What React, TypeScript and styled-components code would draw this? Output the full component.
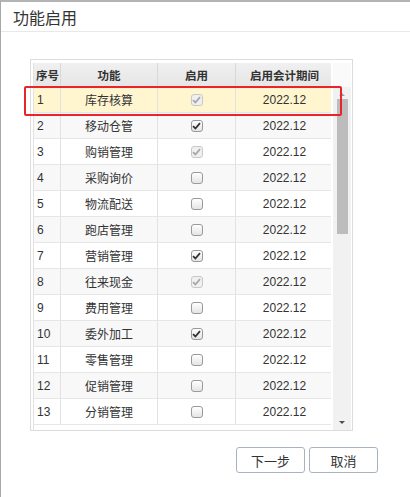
import React, { FC } from "react";
import styled, { createGlobalStyle } from "styled-components";

const GlobalStyle = createGlobalStyle`
  html, body {
    margin: 0;
    padding: 0;
    background: #ffffff;
  }
  body {
    font-family: "Liberation Sans", Arial, "Noto Sans CJK SC", sans-serif;
    color: #333333;
  }
`;

type Row = {
  no: number;
  name: string;
  state: "on" | "locked" | "off";
  period: string;
};

const rows: Row[] = [
  { no: 1, name: "库存核算", state: "locked", period: "2022.12" },
  { no: 2, name: "移动仓管", state: "on", period: "2022.12" },
  { no: 3, name: "购销管理", state: "locked", period: "2022.12" },
  { no: 4, name: "采购询价", state: "off", period: "2022.12" },
  { no: 5, name: "物流配送", state: "off", period: "2022.12" },
  { no: 6, name: "跑店管理", state: "off", period: "2022.12" },
  { no: 7, name: "营销管理", state: "on", period: "2022.12" },
  { no: 8, name: "往来现金", state: "locked", period: "2022.12" },
  { no: 9, name: "费用管理", state: "off", period: "2022.12" },
  { no: 10, name: "委外加工", state: "on", period: "2022.12" },
  { no: 11, name: "零售管理", state: "off", period: "2022.12" },
  { no: 12, name: "促销管理", state: "off", period: "2022.12" },
  { no: 13, name: "分销管理", state: "off", period: "2022.12" },
];

const Dialog = styled.div`
  position: relative;
  box-sizing: border-box;
  width: 410px;
  height: 497px;
  border-top: 2px solid #b4b4b4;
  border-left: 1px solid #a8a8a8;
  background: #ffffff;
  overflow: hidden;
`;

const TitleBar = styled.div`
  display: flex;
  align-items: center;
  height: 29px;
  padding-left: 12px;
  border-bottom: 1px solid #e8e8e8;
  font-family: "Noto Sans CJK SC", sans-serif;
  font-size: 16px;
  color: #333333;
`;

const Body = styled.div`
  padding: 27px 0 0 29px;
`;

const GridFrame = styled.div`
  box-sizing: border-box;
  display: flex;
  width: 323px;
  height: 372px;
  border: 1px solid #dcdcdc;
  padding: 3px 1px 0 2px;
  background: #ffffff;
`;

const Table = styled.div`
  width: 300px;
  height: 367px;
  overflow: hidden;
  border-left: 1px solid #e2e2e2;
`;

const cols = "27px 97px 78px 98px";

const HeaderRow = styled.div`
  display: grid;
  grid-template-columns: ${cols};
  height: 23px;
  background: linear-gradient(#f0f0f0, #e6e6e6);
  border-bottom: 1px solid #d6d6d6;
`;

const HeadCell = styled.div<{ $left?: boolean }>`
  display: flex;
  align-items: center;
  justify-content: ${(p) => (p.$left ? "flex-start" : "center")};
  padding-left: ${(p) => (p.$left ? "2px" : "0")};
  border-right: 1px solid #d8d8d8;
  font-family: "Noto Sans CJK SC", sans-serif;
  font-size: 11.5px;
  font-weight: 700;
  color: #333333;
`;

const DataRow = styled.div<{ $bg: string }>`
  display: grid;
  grid-template-columns: ${cols};
  height: 26px;
  box-sizing: border-box;
  border-bottom: 1px solid #e6e6e6;
  background: ${(p) => p.$bg};
`;

const Cell = styled.div<{ $left?: boolean }>`
  display: flex;
  align-items: center;
  justify-content: ${(p) => (p.$left ? "flex-start" : "center")};
  padding-left: ${(p) => (p.$left ? "3px" : "0")};
  border-right: 1px solid #e2e2e2;
  font-size: 12px;
  color: #333333;
  font-family: "Liberation Sans", Arial, "Noto Sans CJK SC", sans-serif;
`;

const NameCell = styled(Cell)`
  font-family: "Noto Sans CJK SC", sans-serif;
  font-size: 12px;
`;

const Box = styled.span<{ $dim: boolean }>`
  box-sizing: border-box;
  display: inline-flex;
  align-items: center;
  justify-content: center;
  width: 12px;
  height: 12px;
  border: 1px solid ${(p) => (p.$dim ? "#c8c8c8" : "#9a9a9a")};
  border-radius: 3px;
  background: ${(p) => (p.$dim ? "#f0f0f0" : "linear-gradient(#ffffff, #e4e4e4)")};
`;

const CheckBox: FC<{ state: Row["state"] }> = ({ state }) => (
  <Box $dim={state === "locked"}>
    {state !== "off" && (
      <svg width="9" height="8" viewBox="0 0 9 8">
        <path
          d="M1 4.2 L3.4 6.5 L8 1.2"
          fill="none"
          stroke={state === "locked" ? "#a8a8a8" : "#333333"}
          strokeWidth="1.8"
        />
      </svg>
    )}
  </Box>
);

const ScrollBar = styled.div`
  display: flex;
  flex-direction: column;
  width: 18px;
  margin-left: 2px;
`;

const ScrollHead = styled.div`
  height: 24px;
  background: #fafafa;
`;

const Track = styled.div`
  flex: 1;
  display: flex;
  flex-direction: column;
  align-items: center;
  background: #f1f1f1;
  padding-top: 6px;
  padding-bottom: 6px;
`;

const Arrow = styled.div<{ $up?: boolean }>`
  width: 0;
  height: 0;
  border-left: 3px solid transparent;
  border-right: 3px solid transparent;
  ${(p) =>
    p.$up
      ? "border-bottom: 3px solid #a0a0a0;"
      : "border-top: 3px solid #505050;"}
`;

const Thumb = styled.div`
  width: 11px;
  height: 135px;
  margin-top: 3px;
  background: #bcbcbc;
`;

const Spacer = styled.div`
  flex: 1;
`;

const Highlight = styled.div`
  position: absolute;
  left: 23px;
  top: 84px;
  width: 318px;
  height: 30px;
  box-sizing: border-box;
  border: 2px solid #e8262a;
  border-radius: 2px;
  pointer-events: none;
`;

const Footer = styled.div`
  display: flex;
  justify-content: flex-end;
  gap: 4px;
  padding: 16px 32px 0 0;
`;

const Button = styled.button`
  box-sizing: border-box;
  width: 69px;
  height: 26px;
  border: 1px solid #a9b3bf;
  border-radius: 3px;
  background: #ffffff;
  font-family: "Noto Sans CJK SC", sans-serif;
  font-size: 13px;
  color: #333333;
  padding: 0;
`;

const App: FC = () => {
  return (
    <>
      <GlobalStyle />
      <Dialog>
        <TitleBar>功能启用</TitleBar>
        <Body>
          <GridFrame>
            <Table>
              <HeaderRow>
                <HeadCell $left>序号</HeadCell>
                <HeadCell>功能</HeadCell>
                <HeadCell>启用</HeadCell>
                <HeadCell>启用会计期间</HeadCell>
              </HeaderRow>
              {rows.map((r) => (
                <DataRow
                  key={r.no}
                  $bg={r.no === 1 ? "#fff5cf" : r.no % 2 === 0 ? "#f8f8f8" : "#ffffff"}
                >
                  <Cell $left>{r.no}</Cell>
                  <NameCell>{r.name}</NameCell>
                  <Cell>
                    <CheckBox state={r.state} />
                  </Cell>
                  <Cell>{r.period}</Cell>
                </DataRow>
              ))}
            </Table>
            <ScrollBar>
              <ScrollHead />
              <Track>
                <Arrow $up />
                <Thumb />
                <Spacer />
                <Arrow />
              </Track>
            </ScrollBar>
          </GridFrame>
          <Footer>
            <Button>下一步</Button>
            <Button>取消</Button>
          </Footer>
        </Body>
        <Highlight />
      </Dialog>
    </>
  );
};

export default App;
